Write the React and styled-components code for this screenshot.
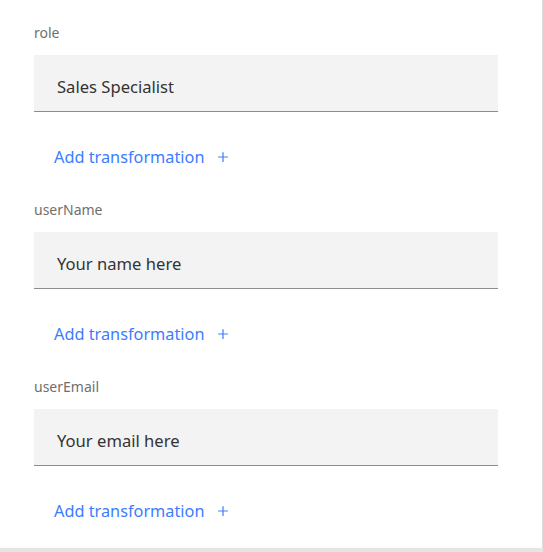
import React from 'react';
import styled, { createGlobalStyle } from 'styled-components';

const fields = [
    { name: 'role', value: 'Sales Specialist' },
    { name: 'userName', value: 'Your name here' },
    { name: 'userEmail', value: 'Your email here' },
];

const App = () => {
    return (
        <>
            <GlobalStyle />
            <Panel>
                {fields.map((field) => (
                    <Field key={field.name}>
                        <Label>{field.name}</Label>
                        <InputBox>{field.value}</InputBox>
                        <AddButton type="button">
                            Add transformation
                            <PlusIcon viewBox="0 0 16 16">
                                <path d="M8 1.5v13M1.5 8h13" />
                            </PlusIcon>
                        </AddButton>
                    </Field>
                ))}
            </Panel>
        </>
    );
};

export default App;

// Styled Components
const GlobalStyle = createGlobalStyle`
    body {
        margin: 0;
        background: #e8e4e4;
        font-family: 'Noto Sans', 'Open Sans', sans-serif;
    }
`;

const Panel = styled.div`
    box-sizing: border-box;
    width: 543px;
    height: 548px;
    padding: 24px 44px 0 34px;
    background: #ffffff;
    border-right: 1px solid #e0dcdc;
    display: flex;
    flex-direction: column;
    gap: 20px;
`;

const Field = styled.div`
    display: flex;
    flex-direction: column;
`;

const Label = styled.div`
    font-size: 14px;
    line-height: 18px;
    color: #6f6f6f;
    margin-bottom: 13px;
`;

const InputBox = styled.div`
    box-sizing: border-box;
    height: 57px;
    display: flex;
    align-items: center;
    padding: 6px 0 0 23px;
    background: #f3f3f3;
    border-bottom: 1px solid #8d8d8d;
    font-size: 16.6px;
    color: #333333;
`;

const AddButton = styled.button`
    align-self: flex-start;
    margin-top: 21px;
    height: 48px;
    padding: 0 0 0 20px;
    display: flex;
    align-items: center;
    gap: 13px;
    background: none;
    border: none;
    font-family: inherit;
    font-size: 16.3px;
    color: #3b7cff;
    cursor: pointer;
`;

const PlusIcon = styled.svg`
    width: 12px;
    height: 12px;
    fill: none;
    stroke: #3b7cff;
    stroke-width: 1.6;
`;
